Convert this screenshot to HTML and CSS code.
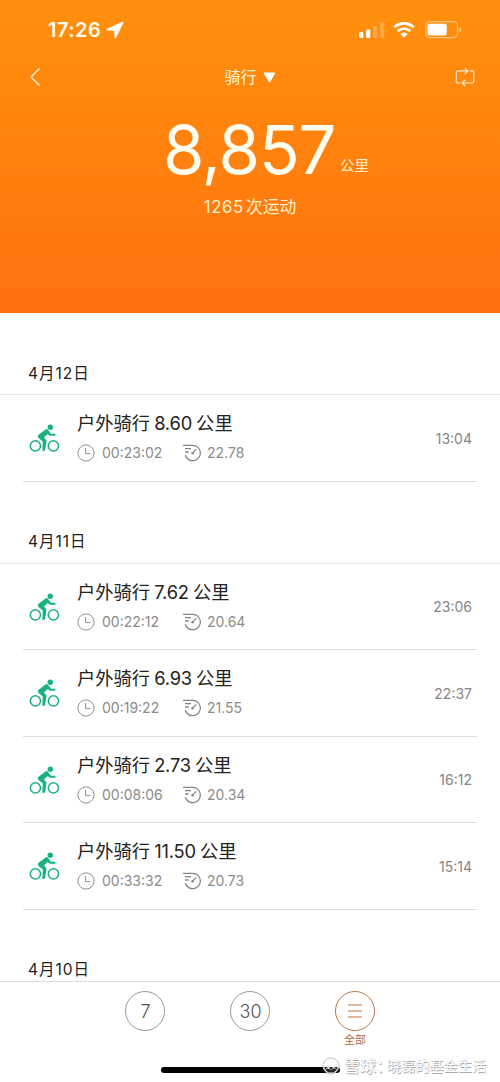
FILE: index.html
```html
<!DOCTYPE html>
<html lang="zh-CN">
<head>
<meta charset="utf-8">
<title>骑行</title>
<link rel="stylesheet" href="styles.css">
</head>
<body>
<svg class="defs" aria-hidden="true">
  <symbol id="bike" viewBox="0 0 32 30">
    <g fill="none" stroke="#18b27c" stroke-width="1.5"><circle cx="6.4" cy="21.8" r="5.1"/><circle cx="24.4" cy="21.8" r="5.1"/></g>
    <circle cx="21.3" cy="3.3" r="2.7" fill="#18b27c"/>
    <path d="M17.6 4.8 9.6 10.8C8.4 11.8 8.6 13.2 9.8 14.2L13.8 17.6 13.3 26.8H15.9L17.6 16.6 14.9 13.4 18.8 9.9 20.8 11.7H26.4V9.8H21.9L19.2 6Z" fill="#18b27c"/>
  </symbol>
  <symbol id="clock" viewBox="0 0 18 18">
    <g fill="none" stroke="#929292" stroke-width="1"><circle cx="9" cy="9" r="8.1"/><path d="M8.5 4V9.6H13.5"/></g>
  </symbol>
  <symbol id="speed" viewBox="0 0 20 18">
    <g fill="none" stroke="#858585" stroke-width="1.3"><path d="M0 1.3H9.8A7.7 7.7 0 1 1 2.3 11.2M2 4.7H8M2 8H5.7M9.3 9.4 13.3 5.4"/></g>
    <circle cx="9.5" cy="9.2" r="1.2" fill="#858585"/>
  </symbol>
</svg>
<div class="screen">
  <header class="hero">
    <div class="status">
      <span class="clock">17:26</span>
      <svg class="location" viewBox="0 0 18 18"><path d="M16.5 1 .8 8.2Q0 8.8 1 9.1L8.4 9.5 8.8 16.6Q9.2 17.6 9.8 16.7L17.1 1.7Q17.4.7 16.5 1Z" fill="#fff" stroke="#fff" stroke-width=".6"/></svg>
      <svg class="signal" viewBox="0 0 26 16"><g fill="#fff"><rect x="0" y="10" width="4.3" height="6" rx="1"/><rect x="7" y="7.5" width="4.3" height="8.5" rx="1"/><g opacity=".23"><rect x="14" y="4" width="4.3" height="12" rx="1"/><rect x="21" y="0" width="4.3" height="16" rx="1"/></g></g></svg>
      <svg class="wifi" viewBox="0 0 22 16"><g fill="none" stroke="#fff" stroke-width="2.7"><path d="M1 5.2Q11-2.7 21 5.2M4.6 9Q11 4.1 17.4 9"/></g><path d="M7.4 12.1Q11 9 14.6 12.1L11 15.8Z" fill="#fff"/></svg>
      <svg class="battery" viewBox="0 0 37 18"><rect x=".6" y=".6" width="32" height="16" rx="4.5" fill="none" stroke="#fff" stroke-opacity=".48" stroke-width="1.1"/><rect x="2.4" y="2.8" width="19.4" height="11.6" rx="2.4" fill="#fff"/><path d="M34.5 6Q36.3 6.6 36.3 8.7T34.5 11.4Z" fill="#fff" opacity=".5"/></svg>
    </div>
    <nav class="nav">
      <svg class="back" viewBox="0 0 12 20"><path d="M10.5 1.5 2 10 10.5 18.5" fill="none" stroke="#fff4dc" stroke-width="1.3"/></svg>
      <div class="sport"><span>骑行</span><svg class="caret" viewBox="0 0 13 11"><path d="M1.2.5H11.8Q12.8.6 12.2 1.5L7.1 9.9Q6.5 10.7 5.9 9.9L.8 1.5Q.2.6 1.2.5Z" fill="#fff"/></svg></div>
      <svg class="sync" viewBox="0 0 20 20"><g fill="none" stroke="#ffecd0" stroke-width="1.2"><path d="M5.3 16H3Q1.2 16 1.2 14.2V5.7Q1.2 3.9 3 3.9H12.5M14.7 3.9H17Q18.8 3.9 18.8 5.7V14.2Q18.8 16 17 16H7.5M9.8.9 12.9 3.9 9.8 6.9M10.2 13 7.1 16 10.2 19"/></g></svg>
    </nav>
    <div class="total"><span class="number">8,857</span><span class="unit">公里</span></div>
    <div class="count"><span class="count-number">1265</span>次运动</div>
  </header>
  <main class="list">
    <section>
      <h2 class="date">4月12日</h2>
      <article class="ride"><svg class="bike"><use href="#bike"/></svg><div class="info"><h3 class="title">户外骑行<span class="distance">8.60</span>公里</h3><div class="stats"><svg class="time-icon"><use href="#clock"/></svg><span class="duration">00:23:02</span><svg class="speed-icon"><use href="#speed"/></svg><span class="speed">22.78</span></div></div><time class="start">13:04</time></article>
    </section>
    <section>
      <h2 class="date">4月11日</h2>
      <article class="ride"><svg class="bike"><use href="#bike"/></svg><div class="info"><h3 class="title">户外骑行<span class="distance">7.62</span>公里</h3><div class="stats"><svg class="time-icon"><use href="#clock"/></svg><span class="duration">00:22:12</span><svg class="speed-icon"><use href="#speed"/></svg><span class="speed">20.64</span></div></div><time class="start">23:06</time></article>
      <article class="ride"><svg class="bike"><use href="#bike"/></svg><div class="info"><h3 class="title">户外骑行<span class="distance">6.93</span>公里</h3><div class="stats"><svg class="time-icon"><use href="#clock"/></svg><span class="duration">00:19:22</span><svg class="speed-icon"><use href="#speed"/></svg><span class="speed">21.55</span></div></div><time class="start">22:37</time></article>
      <article class="ride"><svg class="bike"><use href="#bike"/></svg><div class="info"><h3 class="title">户外骑行<span class="distance">2.73</span>公里</h3><div class="stats"><svg class="time-icon"><use href="#clock"/></svg><span class="duration">00:08:06</span><svg class="speed-icon"><use href="#speed"/></svg><span class="speed">20.34</span></div></div><time class="start">16:12</time></article>
      <article class="ride"><svg class="bike"><use href="#bike"/></svg><div class="info"><h3 class="title">户外骑行<span class="distance">11.50</span>公里</h3><div class="stats"><svg class="time-icon"><use href="#clock"/></svg><span class="duration">00:33:32</span><svg class="speed-icon"><use href="#speed"/></svg><span class="speed">20.73</span></div></div><time class="start">15:14</time></article>
    </section>
    <section><h2 class="date">4月10日</h2></section>
  </main>
  <footer class="tabs">
    <div class="tab"><span class="circle">7</span></div>
    <div class="tab"><span class="circle">30</span></div>
    <div class="tab active"><span class="circle"><svg class="menu" viewBox="0 0 14 14"><path d="M0 1H14M0 7H14M0 13H14" stroke="#c4763c" stroke-width="1.2"/></svg></span><span class="tab-label">全部</span></div>
    <div class="home-indicator"></div>
    <div class="watermark">
      <svg class="brand" viewBox="0 0 18 18"><circle cx="9" cy="9" r="8" fill="#fff" fill-opacity=".15" stroke="#aaa" stroke-width=".9"/><circle cx="9" cy="9" r="7.2" fill="none" stroke="#fff" stroke-width=".9"/><path d="M3.5 6.5 6.3 4.3 9 7.8 12 4.3 14.8 7M5.5 11.5 8 9M12.5 11.5 10.5 9" fill="none" stroke="#fff" stroke-width="1.8"/><path d="M3.2 13 6.2 9.5 8.8 13.2M9.8 12.7 12 10 14.5 12.7" fill="none" stroke="#aaa"/></svg>
      <span class="brand-name">雪球：</span><span class="author">晓磊的基金生活</span>
    </div>
  </footer>
</div>
</body>
</html>
```
FILE: styles.css
```css
* { box-sizing: border-box; }
body { margin: 0; background: #fff; font-family: Inter, "Noto Sans CJK SC", sans-serif; color: #222; }
svg { display: block; flex: none; }
h2, h3 { margin: 0; font-weight: 400; }
.defs { display: none; }
.screen { width: 500px; height: 1082px; overflow: hidden; display: flex; flex-direction: column; }
.hero { height: 313px; flex: none; background: linear-gradient(#ff900d, #ff720f); color: #fffdf0; }
.status { height: 58px; padding: 2px 38px 0 48px; display: flex; align-items: center; }
.clock { width: 53px; font-size: 20px; font-weight: 600; line-height: 24px; letter-spacing: .45px; white-space: nowrap; }
.location { width: 18px; height: 18px; margin-left: 5px; }
.signal { width: 26px; height: 16px; margin-left: auto; }
.wifi { width: 22px; height: 16px; margin-left: 8px; }
.battery { width: 37px; height: 18px; margin-left: 10px; }
.nav { height: 38px; padding: 0 25px 0 29px; display: grid; grid-template-columns: 60px 1fr 60px; align-items: center; }
.back { width: 12px; height: 20px; }
.sport { display: flex; align-items: center; justify-content: center; gap: 6px; font-size: 16px; line-height: 24px; padding-right: 4px; color: #fff4d8; }
.caret { width: 13px; height: 11px; }
.sync { width: 20px; height: 20px; justify-self: end; }
.total { height: 99px; padding: 14px 0 0 163px; display: flex; align-items: flex-start; }
.number { width: 177px; font-size: 67px; font-weight: 400; line-height: 80px; letter-spacing: -1.1px; white-space: nowrap; }
.unit { margin-top: 44px; font-size: 14.5px; line-height: 24px; color: #fff0c9; }
.count { line-height: 24px; font-size: 16.8px; text-align: center; color: #fff0c9; }
.count-number { margin-right: 2px; letter-spacing: .6px; }
.list { flex: 1; min-height: 0; overflow: hidden; }
.date { height: 82px; padding: 48.5px 0 0 28px; font-size: 15.5px; line-height: 24px; letter-spacing: 1px; border-bottom: 1px solid #e8e8e8; }
.ride { height: 86.5px; margin: 0 23px; padding: 15px 5px 0 6px; display: flex; border-bottom: 1px solid #dedede; }
.bike { width: 32px; height: 30px; margin-top: 14px; }
.info { flex: 1; padding-left: 16px; }
.title { font-size: 18.3px; line-height: 26px; white-space: nowrap; }
.distance { margin: 0 4px; letter-spacing: -.15px; }
.stats { height: 34px; display: flex; align-items: center; font-size: 14px; line-height: 20px; color: #8b8b8b; }
.time-icon { width: 18px; height: 18px; }
.duration { width: 81px; margin-left: 7px; letter-spacing: 0; }
.speed-icon { width: 20px; height: 18px; }
.speed { margin-left: 4px; }
.start { margin-top: 18.5px; font-size: 14px; line-height: 20px; color: #858585; }
.tabs { position: relative; height: 101px; flex: none; padding: 9px 125px 0; display: flex; justify-content: space-between; border-top: 1px solid #dcdcdc; background: #fff; }
.tab { width: 40px; display: flex; flex-direction: column; align-items: center; }
.circle { width: 40px; height: 40px; border: 1px solid #999; border-radius: 50%; display: flex; align-items: center; justify-content: center; font-size: 18px; font-weight: 300; line-height: 24px; color: #555; padding: 1px 0 0 1px; }
.active .circle { border-color: #bc7548; padding: 0; }
.menu { width: 14px; height: 14px; }
.tab-label { margin-top: 1px; font-size: 11px; line-height: 16px; color: #b66b38; }
.home-indicator { position: absolute; left: 161px; top: 85px; width: 179px; height: 6px; border-radius: 3px; background: #000; }
.watermark { position: absolute; left: 322px; top: 74px; display: flex; align-items: center; height: 20px; white-space: nowrap; font-size: 14px; line-height: 20px; color: #fff; text-shadow: .7px .7px .5px #aaa, 0 0 1px #ccc; }
.brand { width: 18px; height: 18px; }
.brand-name { width: 43px; margin-left: 4px; font-size: 16px; font-weight: 500; }
.author { font-size: 14.2px; }
```
